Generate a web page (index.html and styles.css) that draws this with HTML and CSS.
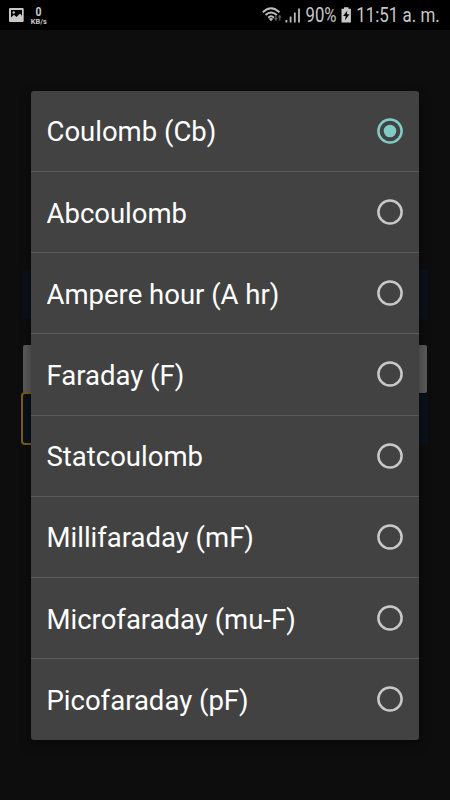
FILE: index.html
```html
<!DOCTYPE html>
<html lang="en">
<head>
<meta charset="utf-8">
<title>Unit selection</title>
<link rel="stylesheet" href="styles.css">
</head>
<body>
<header class="status">
  <svg class="status-art" width="450" height="30" viewBox="0 0 450 30">
    <path fill="#c8c8c8" fill-rule="evenodd" d="M10.200 8h12.300q1.200 0 1.200 1.200v11.600q0 1.200-1.200 1.200H10.200q-1.200 0-1.200-1.200V9.200Q9 8 10.200 8zM11 10v7.500l3-2.700 2.500 2.200 3.500-3.500 2 2.200V10z"/>
    <circle cx="13.700" cy="12.500" r="1.200" fill="#c4c4c4"/>
    <text class="bold" x="35.500" y="15.500" font-size="12.500" textLength="6" lengthAdjust="spacingAndGlyphs">0</text>
    <text class="bold" x="30.800" y="23.800" font-size="7.500" textLength="16" lengthAdjust="spacingAndGlyphs">KB/s</text>
    <g fill="none" stroke="#bdbdbd" stroke-width="1.900">
      <path d="M262.800 12.300Q271 4.300 279.500 12.300"/>
      <path d="M265.500 15Q271 9.800 276.800 15"/>
      <path d="M268.200 17.700Q271 15 274 17.700"/>
    </g>
    <path d="M268.800 18.800Q271 17 273.200 18.800L271 21.300z" fill="#bdbdbd"/>
    <path d="M274 18h1.200v-3h1.300v3h1.300l-1.900 3.300zM277.800 17.500l1.900-3 1.900 3h-1.200v3h-1.300v-3z" fill="#5b5b5b"/>
    <path d="M285.500 20h1.800v2.500h-1.800zM289.700 16.500h1.800v6h-1.800zM293.900 12.500h1.800v10h-1.800zM298.100 8.500h1.800v14h-1.800z" fill="#b9b9b9"/>
    <text x="305.600" y="22" font-size="19.300" textLength="31" lengthAdjust="spacingAndGlyphs">90%</text>
    <path d="M344 7.200h4.500v1.500h2.400v13.700h-9.400V8.700h2.500z" fill="#c8c8c8"/>
    <path d="M347.400 10.500l-4.300 5.500h2.600l-.7 4.300 4.500-6h-2.700z" fill="#000"/>
    <text x="356.200" y="22" font-size="19.300" textLength="83.500" lengthAdjust="spacingAndGlyphs">11:51 a. m.</text>
  </svg>
</header>
<main class="page">
  <div class="title-bar"></div>
  <div class="field"></div>
  <div class="select"><div class="focus"></div></div>
  <ul class="dialog">
    <li><span>Coulomb (Cb)</span><svg class="radio checked" viewBox="0 0 26 26"><circle cx="13" cy="13" r="11.600"/><circle class="dot" cx="13" cy="13" r="6.300"/></svg></li>
    <li><span>Abcoulomb</span><svg class="radio" viewBox="0 0 26 26"><circle cx="13" cy="13" r="11.600"/></svg></li>
    <li><span>Ampere hour (A hr)</span><svg class="radio" viewBox="0 0 26 26"><circle cx="13" cy="13" r="11.600"/></svg></li>
    <li><span>Faraday (F)</span><svg class="radio" viewBox="0 0 26 26"><circle cx="13" cy="13" r="11.600"/></svg></li>
    <li><span>Statcoulomb</span><svg class="radio" viewBox="0 0 26 26"><circle cx="13" cy="13" r="11.600"/></svg></li>
    <li><span>Millifaraday (mF)</span><svg class="radio" viewBox="0 0 26 26"><circle cx="13" cy="13" r="11.600"/></svg></li>
    <li><span>Microfaraday (mu-F)</span><svg class="radio" viewBox="0 0 26 26"><circle cx="13" cy="13" r="11.600"/></svg></li>
    <li><span>Picofaraday (pF)</span><svg class="radio" viewBox="0 0 26 26"><circle cx="13" cy="13" r="11.600"/></svg></li>
  </ul>
</main>
</body>
</html>
```

FILE: styles.css
```css
* { box-sizing: border-box; }
body {
  margin: 0;
  height: 800px;
  overflow: hidden;
  background: #0d0d0d;
  font-family: Roboto, sans-serif;
}
.status {
  height: 30px;
  background: #000;
}
.status-art { display: block; }
.status-art text { fill: #c8c8c8; }
.status-art .bold { font-weight: 700; }
.page {
  position: relative;
  height: 770px;
  padding: 240px 22px 0 23px;
}
.title-bar {
  height: 49px;
  background: #0a1119;
}
.field {
  height: 48px;
  margin: 26px 1px 0 0;
  border-radius: 2px;
  background: #5a5a5a;
}
.select {
  height: 50px;
  margin-top: 1px;
  background: #0a1119;
}
.focus {
  position: relative;
  top: -2px;
  left: -2px;
  width: 200px;
  height: 53px;
  border: 2px solid #7d5a1c;
  border-radius: 4px;
  background: #0a1119;
}
.dialog {
  position: absolute;
  top: 60.500px;
  left: 31px;
  width: 388px;
  margin: 0;
  padding: 0;
  list-style: none;
  border-radius: 3px;
  background: #424242;
  box-shadow: 0 4px 12px rgba(0, 0, 0, .4);
}
.dialog li {
  display: flex;
  align-items: center;
  justify-content: space-between;
  height: 81.200px;
  padding: 0 16px 0 15.500px;
  color: #fff;
  font-size: 27.500px;
  line-height: 32px;
  white-space: nowrap;
}
.dialog li:first-child { height: 80.500px; }
.dialog li:last-child { height: 81.500px; padding-bottom: .3px; }
.dialog li + li { border-top: 1px solid #5a5a5a; }
.dialog span { position: relative; top: 1.600px; }
.radio {
  width: 26px;
  height: 26px;
  fill: none;
  stroke: #c8c8c8;
  stroke-width: 2.500px;
}
.radio.checked { stroke: #80cbc4; }
.radio .dot {
  fill: #80cbc4;
  stroke: none;
}
```
